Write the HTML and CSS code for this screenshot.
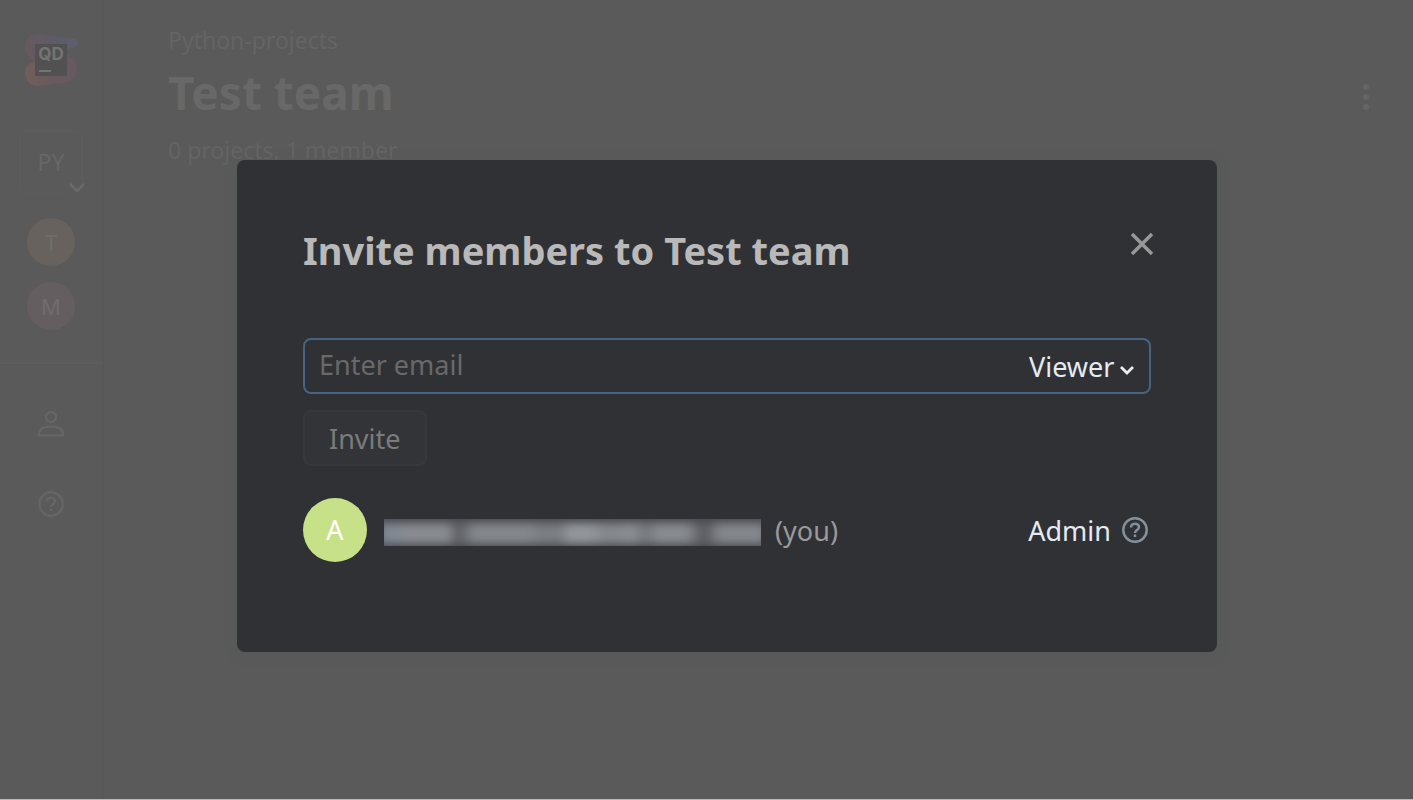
FILE: index.html
```html
<!DOCTYPE html>
<html lang="en">
<head>
<meta charset="utf-8">
<meta name="viewport" content="width=device-width, initial-scale=1">
<title>Test team</title>
<link rel="stylesheet" href="styles.css">
</head>
<body>
<div class="app">
  <nav class="sidebar">
    <div class="spaces">
      <a class="logo" href="#" aria-label="Home">
        <svg width="54" height="54" viewBox="0 0 54 54">
          <defs>
            <linearGradient id="top" x1="0" y1="0" x2="1" y2="0"><stop offset="0" stop-color="#67595f"/><stop offset=".6" stop-color="#5e5b69"/><stop offset="1" stop-color="#5c5f70"/></linearGradient>
            <linearGradient id="low" x1="0" y1="0" x2="1" y2="0"><stop offset="0" stop-color="#6f6058"/><stop offset=".5" stop-color="#6a5a5e"/><stop offset="1" stop-color="#675961"/></linearGradient>
          </defs>
          <path fill="url(#top)" d="M14 1C6 1 1 7 1 14c0 5 3 9 6 12l6 4 30-14 6-1a4 4 0 0 0 0-9L18 1z"/>
          <path fill="url(#low)" d="M11 28C4 30 1 35 1 40c0 8 6 13 13 13l29-4c6-1 10-6 10-12 0-7-4-12-10-15z"/>
          <path fill="#515151" d="M11 11h32v32H11z"/>
          <path fill="#747474" d="M15 37h12v2H15z"/>
          <text x="27" y="27" text-anchor="middle" class="logo-text">QD</text>
        </svg>
      </a>
      <button class="org" type="button">PY
        <svg class="org-arrow" width="22" height="16" viewBox="0 0 22 16"><path d="M0 0h22v16H0z" fill="#5a5a5a"/><path d="M4 4l7 7 7-7" fill="none" stroke="#6a6a6a" stroke-width="2.500"/></svg>
      </button>
      <a class="team team-t" href="#">T</a>
      <a class="team team-m" href="#">M</a>
    </div>
    <div class="tools">
      <a href="#" aria-label="Profile">
        <svg width="32" height="32" viewBox="0 0 32 32" fill="none" stroke="#656565" stroke-width="2.500"><circle cx="16" cy="9" r="5"/><path d="M4 27.500v-2c0-5 6-7 12-7s12 2 12 7v2z"/></svg>
      </a>
      <a href="#" aria-label="Help">
        <svg width="32" height="32" viewBox="0 0 32 32" fill="none" stroke="#656565" stroke-width="2.500"><circle cx="16" cy="16" r="11.700"/><path d="M12 13.500c0-5 8-5 8-.5 0 3-4 3-4 6"/><path d="M16 20.500v2.500"/></svg>
      </a>
    </div>
  </nav>
  <main class="page">
    <div>
      <a class="crumb" href="#">Python-projects</a>
      <h1>Test team</h1>
      <p class="summary">0 projects, 1 member</p>
    </div>
    <button class="more" type="button" aria-label="More actions">
      <svg width="8" height="28" viewBox="0 0 8 28" fill="#656565"><circle cx="4" cy="4" r="3"/><circle cx="4" cy="14" r="3"/><circle cx="4" cy="24" r="3"/></svg>
    </button>
  </main>
</div>
<div class="overlay">
  <section class="dialog" role="dialog" aria-modal="true" aria-labelledby="dialog-title">
    <header class="dialog-head">
      <h2 id="dialog-title">Invite members to Test team</h2>
      <button class="close" type="button" aria-label="Close">
        <svg width="24" height="24" viewBox="0 0 24 24" fill="none" stroke="#989898" stroke-width="3.500"><path d="M2 2l20 20M22 2L2 22"/></svg>
      </button>
    </header>
    <form class="invite">
      <div class="field">
        <input type="email" placeholder="Enter email" aria-label="Email">
        <select aria-label="Role"><option>Viewer</option></select>
        <svg width="16" height="12" viewBox="0 0 16 12" fill="none" stroke="#eaeef2" stroke-width="2.800"><path d="M2 3l6 6 6-6"/></svg>
      </div>
      <button class="submit" type="submit">Invite</button>
    </form>
    <div class="member">
      <span class="avatar">A</span>
      <span class="redacted" role="img" aria-label="Hidden email"><span class="smear"></span></span>
      <span class="you">(you)</span>
      <span class="role">Admin</span>
      <button class="hint" type="button" aria-label="About roles">
        <svg width="28" height="28" viewBox="0 0 28 28" fill="none" stroke="#82919b" stroke-width="2.500"><circle cx="14" cy="14" r="11.700"/><path d="M10 11.500c0-5 8-5 8-.5 0 3-4 3-4 6"/><path d="M14 18.500v2.500"/></svg>
      </button>
    </div>
  </section>
</div>
</body>
</html>
```
FILE: styles.css
```css
* { box-sizing: border-box; }
body {
  margin: 0;
  background: #5a5a5a;
  color: #646464;
  font-family: "Noto Sans", "Open Sans", sans-serif;
}
a { color: inherit; text-decoration: none; }
button {
  padding: 0;
  border: 0;
  background: none;
  color: inherit;
  font: inherit;
}
svg { display: block; }
.app {
  display: flex;
  min-height: 100vh;
  border-bottom: 1px solid #b8b8b8;
}
.sidebar {
  width: 104px;
  border-right: 2px solid #585858;
}
.spaces {
  display: flex;
  flex-direction: column;
  align-items: center;
  padding: 33px 0 32px;
  border-bottom: 2px solid #5d5d5d;
}
.logo { margin-bottom: 43px; }
.logo-text {
  fill: #747474;
  font-family: Inter, sans-serif;
  font-size: 17px;
  font-weight: 700;
}
.org {
  position: relative;
  width: 64px;
  height: 64px;
  margin-bottom: 24px;
  border: 2px solid #5c5c5c;
  border-radius: 6px;
  color: #676767;
  font-size: 23px;
}
.org-arrow { position: absolute; right: -7px; bottom: -4px; }
.team {
  width: 48px;
  height: 48px;
  border-radius: 50%;
  text-align: center;
  font-size: 22px;
  line-height: 48px;
}
.team-t { margin-bottom: 16px; background: #67625d; color: #6e6e6e; }
.team-m { background: #655e61; color: #6d6d6f; }
.tools {
  display: flex;
  flex-direction: column;
  align-items: center;
  gap: 48px;
  padding-top: 44px;
}
.page {
  display: flex;
  flex: 1;
  justify-content: space-between;
  align-items: flex-start;
  padding: 24px 43px 0 64px;
}
.crumb { display: block; font-size: 23px; line-height: 32px; }
h1 {
  margin: 4px 0;
  color: #686868;
  font-size: 46px;
  font-weight: 700;
  line-height: 64px;
}
.summary { margin: 0; margin-top: 10px; font-size: 23px; line-height: 32px; }
.more { margin-top: 59px; }
.overlay {
  position: absolute;
  inset: 0;
  display: flex;
  justify-content: center;
  align-items: center;
  padding: 12px 0 0 41px;
}
.dialog {
  width: 980px;
  max-width: 100%;
  padding: 64px 66px 90px;
  border-radius: 8px;
  background: #303135;
  box-shadow: 0 2px 12px #50585866;
}
.dialog-head {
  display: flex;
  justify-content: space-between;
  align-items: flex-start;
  margin-bottom: 62px;
}
h2 {
  margin: 0;
  color: #b9b9b9;
  font-size: 38px;
  font-weight: 700;
  line-height: 52px;
}
.close { margin: 8px -3px 0 0; }
.invite {
  display: flex;
  flex-direction: column;
  align-items: flex-start;
  gap: 16px;
  margin-bottom: 32px;
}
.field {
  display: flex;
  align-items: center;
  width: 100%;
  height: 56px;
  padding: 0 14px;
  border: 2px solid #466482;
  border-radius: 8px;
}
.field input {
  flex: 1;
  min-width: 0;
  padding: 0 0 3px;
  border: 0;
  outline: 0;
  background: none;
  color: #eaeef2;
  font: inherit;
  font-size: 27px;
}
.field input::placeholder { color: #696969; opacity: 1; }
.field select {
  appearance: none;
  margin-right: 4px;
  padding: 0;
  border: 0;
  background: none;
  color: #e4ebf2;
  font: inherit;
  font-size: 27px;
}
.field svg { margin-top: 8px; }
.submit {
  height: 56px;
  padding: 0 24px;
  border: 2px solid #37383c;
  border-radius: 8px;
  background: #333438;
  color: #7b7b7b;
  font-size: 27px;
}
.member { display: flex; align-items: center; font-size: 27px; }
.avatar {
  width: 64px;
  height: 64px;
  margin-right: 17px;
  border-radius: 50%;
  background: #c6e188;
  color: #fff;
  line-height: 64px;
  text-align: center;
}
.redacted {
  width: 377px;
  height: 27px;
  margin: 4px 14px 0 0;
  overflow: hidden;
  background: #47494d;
}
.smear {
  display: block;
  height: 21px;
  margin: 4px -4px;
  background: linear-gradient(90deg, #7f8894 0 10px, #888b90 24px 68px, #606266 76px 80px, #84878c 94px 150px, #7b7e83 158px 180px, #93979b 190px 210px, #85888d 224px 240px, #8b8f93 248px 252px, #777a7e 264px 268px, #888b90 278px 306px, #5c5e62 322px 326px, #84878c 340px);
  filter: blur(4px);
}
.you { color: #999a9b; }
.role { margin-left: auto; color: #e4ebf2; }
.hint { margin: 0 2px 0 10px; }
```
